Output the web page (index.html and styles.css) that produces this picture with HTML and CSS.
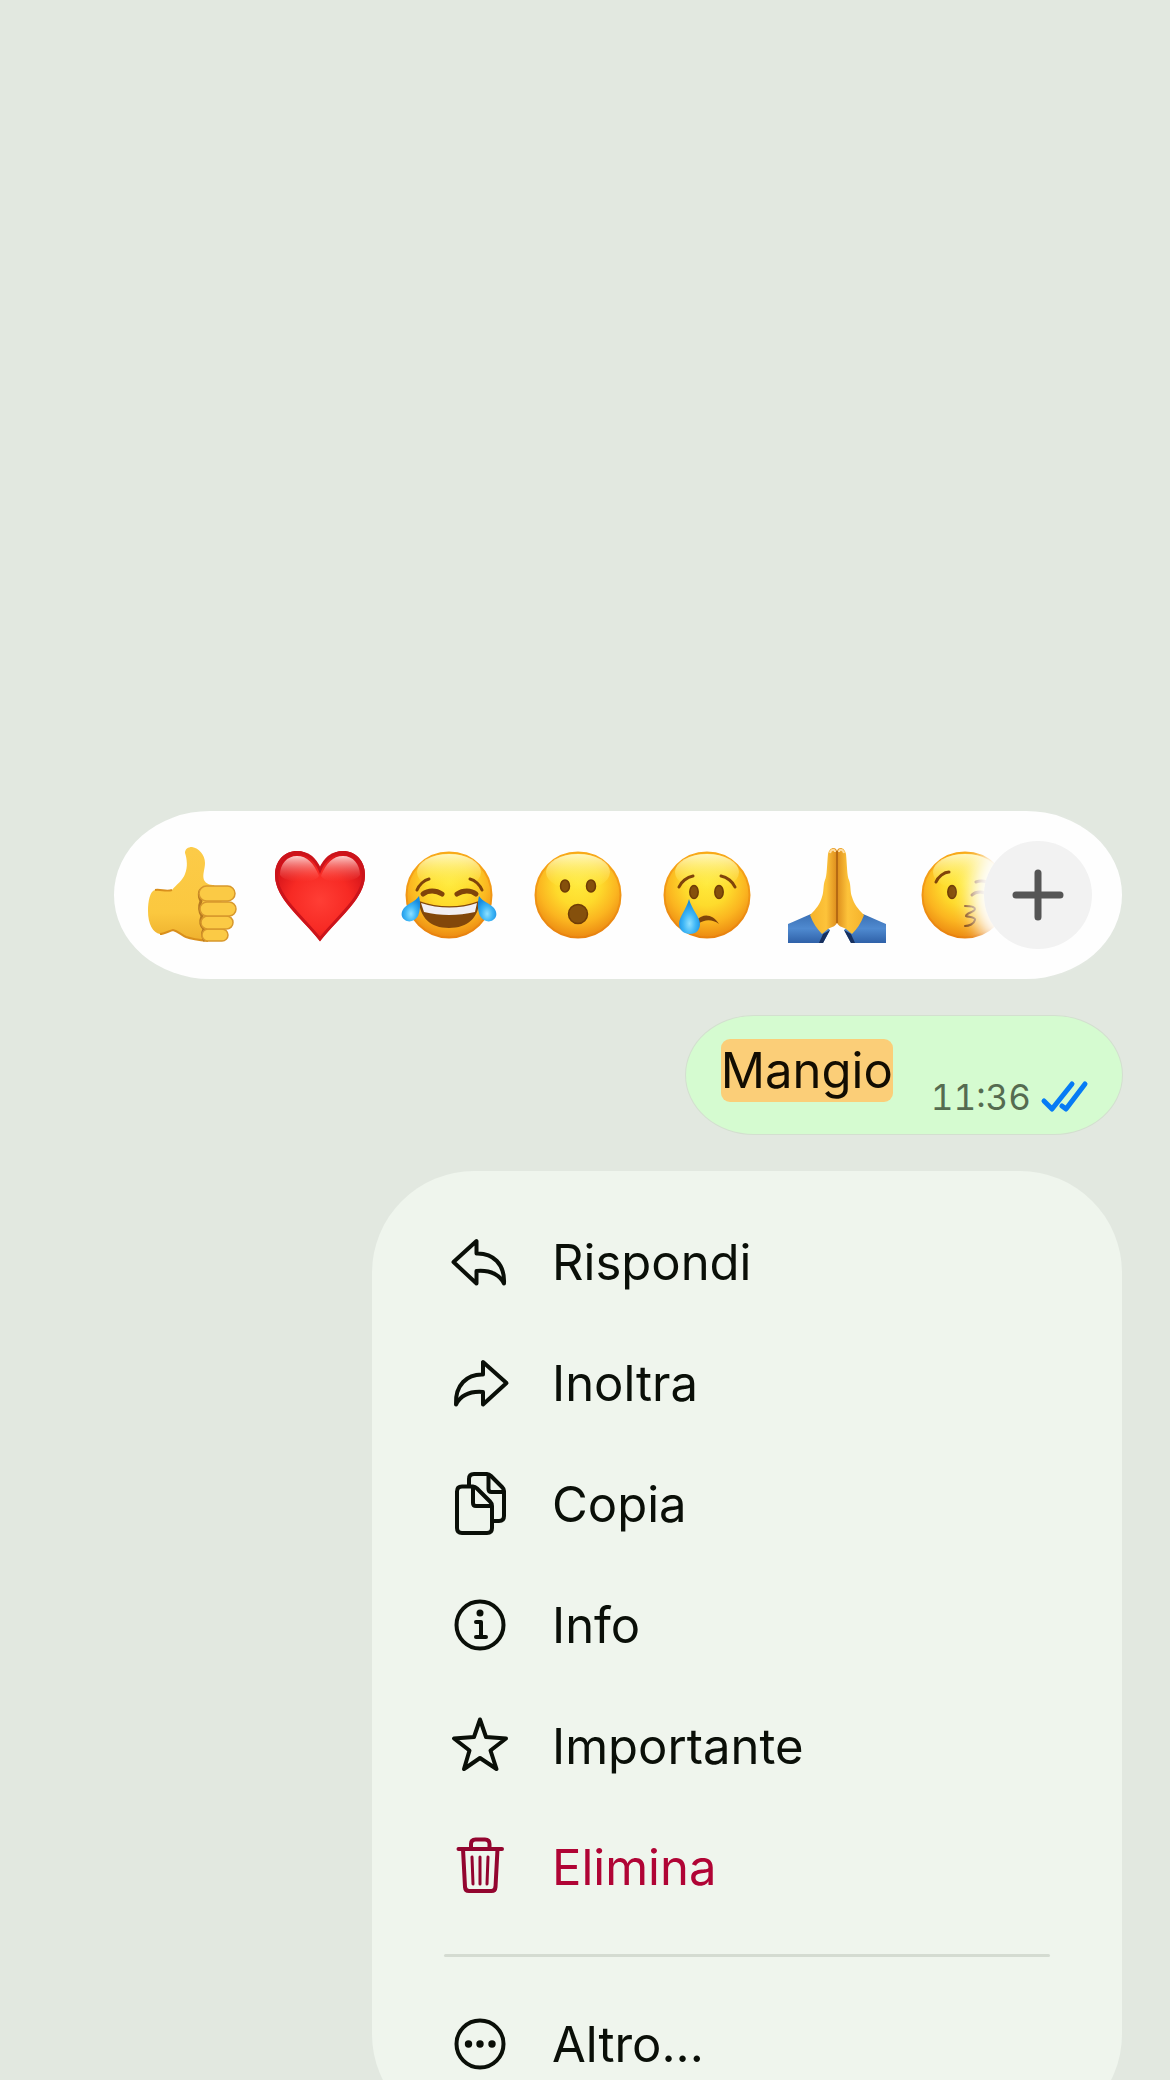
FILE: index.html
```html
<!DOCTYPE html>
<html lang="it">
  <head>
    <meta charset="UTF-8" />
    <meta name="viewport" content="width=device-width, initial-scale=1.0" />
    <title>Chat</title>
    <link rel="stylesheet" href="styles.css" />
  </head>
  <body>
    <main class="chat">
      <!-- Reactions start -->
      <div class="reactions">
        <div class="emoji-list">
          <button class="emoji" aria-label="Mi piace">
            <svg viewBox="0 0 96 96">
              <defs>
                <linearGradient id="hand" x1="0" y1="0" x2="0" y2="1">
                  <stop offset="0" stop-color="#fccb48" />
                  <stop offset="0.7" stop-color="#fbc83f" />
                  <stop offset="1" stop-color="#eeb02e" />
                </linearGradient>
                <radialGradient id="face" cx="0.5" cy="0.36" r="0.66">
                  <stop offset="0" stop-color="#ffea3c" />
                  <stop offset="0.4" stop-color="#fedb2c" />
                  <stop offset="0.7" stop-color="#fbb520" />
                  <stop offset="1" stop-color="#ea8510" />
                </radialGradient>
                <linearGradient id="shine" x1="0" y1="0" x2="0" y2="1">
                  <stop offset="0" stop-color="#fffbd0" stop-opacity="0.9" />
                  <stop offset="1" stop-color="#fff04a" stop-opacity="0" />
                </linearGradient>
                <linearGradient id="rim" x1="0" y1="0" x2="0" y2="1">
                  <stop offset="0" stop-color="#f8a91a" />
                  <stop offset="1" stop-color="#e8820f" />
                </linearGradient>
                <radialGradient id="tear" cx="0.5" cy="0.7" r="0.6">
                  <stop offset="0" stop-color="#8fe0ff" />
                  <stop offset="0.5" stop-color="#3eb6f6" />
                  <stop offset="1" stop-color="#168be0" />
                </radialGradient>
                <g id="head">
                  <circle cx="47" cy="48" r="42.500" fill="url(#face)" stroke="url(#rim)" stroke-width="2" />
                  <ellipse cx="47" cy="25" rx="32" ry="18" fill="url(#shine)" />
                </g>
              </defs>
              <path d="M41 6C41 2 44 0 48 0C55 1 61 8 61 16C61 22 58 28 60 33C62 37 66 38 70 38L80 60L76 92L66 94C55 93 48 92 42 90C37 88 34 84 29 83C25 84 20 87 16 87C9 86 4 77 4 64C4 54 6 44 11 43C17 42 22 45 28 43C32 38 39 33 41 27C44 20 43 12 41 6Z" fill="url(#hand)" />
              <path d="M11 43C17 42 22 45 28 43M16 87C20 87 25 84 29 83C34 84 37 88 42 90C48 92 55 93 64 94" fill="none" stroke="#d98f1c" stroke-width="2" />
              <path d="M60 41C55 42 54 48 57 54C55 59 55 64 58 69C56 74 56 78 60 82C58 86 58 90 61 94" fill="none" stroke="#b87a20" stroke-width="3" />
              <g fill="#fbca45" stroke="#d8982c" stroke-width="1.500">
                <rect x="58" y="82" width="26" height="12" rx="6" />
                <rect x="57" y="69" width="32" height="13" rx="6.500" />
                <rect x="56" y="55" width="36" height="14" rx="7" />
                <rect x="55" y="39" width="36" height="15" rx="7.500" />
              </g>
            </svg>
          </button>
          <button class="emoji" aria-label="Cuore">
            <svg viewBox="0 0 96 96">
              <defs>
                <radialGradient id="heart" cx="0.5" cy="0.55" r="0.6">
                  <stop offset="0" stop-color="#ff3e35" />
                  <stop offset="0.55" stop-color="#f72a24" />
                  <stop offset="1" stop-color="#cf1018" />
                </radialGradient>
                <linearGradient id="gloss" x1="0" y1="0" x2="0" y2="1">
                  <stop offset="0" stop-color="#ffd9d6" stop-opacity="0.95" />
                  <stop offset="1" stop-color="#ff5a50" stop-opacity="0" />
                </linearGradient>
              </defs>
              <path d="M47 24C42 11 34 4 24 4C11 4 2 14 2 28C2 52 28 70 47 94C66 70 92 52 92 28C92 14 83 4 70 4C60 4 52 11 47 24Z" fill="url(#heart)" />
              <path d="M47 23C42 11 34 5.500 24 5.500C12 5.500 3.500 15 3.500 28C3.500 51 29 69 47 92C65 69 90.500 51 90.500 28C90.500 15 82 5.500 70 5.500C60 5.500 52 11 47 23Z" fill="none" stroke="#cb141b" stroke-width="3" />
              <path d="M24 9C14 9 7 17 7 28C12 36 40 38 46 29C41 16 34 9 24 9ZM70 9C80 9 87 17 87 28C82 36 54 38 48 29C53 16 60 9 70 9Z" fill="url(#gloss)" />
            </svg>
          </button>
          <button class="emoji" aria-label="Risata">
            <svg viewBox="0 0 96 96">
              <use href="#head" />
              <g fill="none" stroke="#80440a" stroke-width="3" stroke-linecap="round">
                <path d="M15 43C17 38 22 33 27 32M80 43C78 38 73 33 68 32" />
                <path d="M21 47C26 43 34 43 40 47M55 47C61 43 69 43 74 47" stroke-width="5" />
              </g>
              <path d="M17 54C36 61 59 61 77 54C77 70 66 81 47 81C28 81 18 70 17 54Z" fill="#82470a" />
              <path d="M19 56C37 62 58 62 75 56L73 65C56 69 38 69 22 65Z" fill="#f1eff4" />
              <path d="M17 49C19 57 18 64 16 69C13 74 7 76 3 73C-2 70 -1 64 3 60C7 56 13 55 17 49Z" fill="url(#tear)" />
              <path d="M77 49C75 57 76 64 78 69C81 74 87 76 91 73C96 70 95 64 91 60C87 56 81 55 77 49Z" fill="url(#tear)" />
            </svg>
          </button>
          <button class="emoji" aria-label="Stupore">
            <svg viewBox="0 0 96 96">
              <use href="#head" />
              <g fill="#85500c" stroke="#6f3c06" stroke-width="1.500">
                <ellipse cx="34" cy="39" rx="4.500" ry="6" />
                <ellipse cx="60" cy="39" rx="4.500" ry="6" />
                <circle cx="47" cy="67" r="9.500" />
              </g>
            </svg>
          </button>
          <button class="emoji" aria-label="Tristezza">
            <svg viewBox="0 0 96 96">
              <use href="#head" />
              <g fill="#85500c" stroke="#6f3c06" stroke-width="1.500">
                <ellipse cx="34" cy="45" rx="4.200" ry="6.500" />
                <ellipse cx="59" cy="45" rx="4.200" ry="6.500" />
              </g>
              <path d="M19 40C21 35 27 30 33 29M75 40C73 35 67 30 61 29" fill="none" stroke="#80440a" stroke-width="3" stroke-linecap="round" />
              <path d="M37 73C43 66 53 67 59 77C52 72 45 72 38 77Z" fill="#80440a" />
              <path d="M29 52C32 63 40 70 40 77C40 83 36 87 30 87C24 87 19 83 19 77C19 70 26 63 29 52Z" fill="url(#tear)" />
            </svg>
          </button>
          <button class="emoji" aria-label="Grazie">
            <svg viewBox="0 0 96 96">
              <defs>
                <linearGradient id="sleeve" x1="0" y1="0" x2="0" y2="1">
                  <stop offset="0" stop-color="#3b70b4" />
                  <stop offset="0.5" stop-color="#4f8ad0" />
                  <stop offset="1" stop-color="#2f61a8" />
                </linearGradient>
                <linearGradient id="palm" x1="0" y1="0" x2="1" y2="0">
                  <stop offset="0" stop-color="#f5b32c" />
                  <stop offset="0.6" stop-color="#fdc33a" />
                  <stop offset="1" stop-color="#dd8d1d" />
                </linearGradient>
                <g id="arm">
                  <path d="M22 67C14 70 7 74 -1 77V96H34L41 83Z" fill="url(#sleeve)" />
                  <path d="M34 87L41 83L34 96H30Z" fill="#17305e" />
                  <path d="M39 7C40 0 47 -1 48 4V76C46 80 42 80 39 82L33 87C28 82 24 76 21 68C27 62 31 57 33 50C35 45 34 38 36 33C38 29 38 17 39 7Z" fill="url(#palm)" />
                  <path d="M41 6C42 2 46 2 46 5" fill="none" stroke="#ffdda2" stroke-width="2" />
                </g>
              </defs>
              <use href="#arm" />
              <use href="#arm" transform="translate(96 0) scale(-1 1)" />
              <path d="M48 4V76" stroke="#a85e10" stroke-width="1.500" />
            </svg>
          </button>
          <button class="emoji" aria-label="Bacio">
            <svg viewBox="0 0 96 96">
              <use href="#head" />
              <ellipse cx="34" cy="45" rx="4.200" ry="6.500" fill="#85500c" stroke="#6f3c06" stroke-width="1.500" />
              <g fill="none" stroke="#80440a" stroke-width="3" stroke-linecap="round">
                <path d="M18 35C20 30 26 25 31 25" />
                <path d="M54 48C58 44 66 44 70 48M58 35C64 33 70 35 74 39" />
                <path d="M47 59C52 59 57 60 57 62C57 65 48 66 48 69C50 70 58 70 57 73C56 77 51 79 47 79" stroke-width="2" />
              </g>
            </svg>
          </button>
        </div>
        <button class="btn-plus" aria-label="Altre reazioni">
          <svg viewBox="0 0 50 50"><path d="M25 3V47M3 25H47" /></svg>
        </button>
      </div>
      <!-- Reactions end -->

      <!-- Message -->
      <div class="bubble">
        <mark class="text">Mangio</mark>
        <div class="meta">
          <time>11:36</time>
          <svg class="ticks" viewBox="0 0 46 32">
            <path d="M3 20L11 28L31 3M21 25L25 28L44 3" />
          </svg>
        </div>
      </div>

      <!-- Menu start -->
      <div class="menu">
        <button class="item">
          <svg class="icon" viewBox="0 0 60 60">
            <path d="M3.500 29L26.500 8V20.500C43 20 55 31 54 50.500C49 41 39 37 26.500 38V50.500Z" />
          </svg>
          <span>Rispondi</span>
        </button>
        <button class="item">
          <svg class="icon" viewBox="0 0 60 60">
            <path d="M56.500 29L33 8V20.500C17 20 5 31 6 50.500C11 41 20 37 33 38V50.500Z" />
          </svg>
          <span>Inoltra</span>
        </button>
        <button class="item">
          <svg class="icon" viewBox="0 0 60 60">
            <path d="M19 11V4Q19 -1 24 -1H37Q39 -1 41 1L52 12Q54 14 54 16V41Q54 46 49 46H42" />
            <path d="M38.500 0V14Q38.500 17 41.500 17H53" />
            <path d="M12 11.500H23Q25 11.500 27 13.500L40 26.500Q42 28.500 42 31V53Q42 58 37 58H12Q7 58 7 53V16.500Q7 11.500 12 11.500Z" />
            <path d="M23 12V28Q23 31 26 31H41" />
          </svg>
          <span>Copia</span>
        </button>
        <button class="item">
          <svg class="icon" viewBox="0 0 60 60">
            <circle cx="30" cy="29" r="23.500" />
            <circle class="dot" cx="30" cy="17" r="3.500" />
            <path d="M26 26H31V41M26 41H36" />
          </svg>
          <span>Info</span>
        </button>
        <button class="item">
          <svg class="icon" viewBox="0 0 60 60">
            <path d="M30 2.500L36 20L56 21.500L40.500 33.500L46.500 52L30 41L14 52L19.500 33.500L4 21.500L24 20Z" />
          </svg>
          <span>Importante</span>
        </button>
        <button class="item delete">
          <svg class="icon" viewBox="0 0 60 60">
            <path d="M8.500 11H52M21 11V6Q21 1.500 25.500 1.500H35Q39.500 1.500 39.500 6V11" />
            <path d="M13 11L15 49Q15.300 53 19 53H41.500Q45.200 53 45.500 49L47.500 11" />
            <path class="thin" d="M22 19L23 46M30 19V46M38 19L37 46" />
          </svg>
          <span>Elimina</span>
        </button>
        <hr />
        <button class="item">
          <svg class="icon" viewBox="0 0 60 60">
            <circle cx="30" cy="29" r="23.500" />
            <circle class="dot" cx="18.500" cy="29" r="3.700" />
            <circle class="dot" cx="30" cy="29" r="3.700" />
            <circle class="dot" cx="42" cy="29" r="3.700" />
          </svg>
          <span>Altro...</span>
        </button>
      </div>
      <!-- Menu end -->
    </main>
  </body>
</html>
```
FILE: styles.css
```css
* {
    margin: 0;
    padding: 0;
    box-sizing: border-box;
}

body {
    font-family: Inter, "Liberation Sans", sans-serif;
    background: #e2e8e0;
    color: #0a0f08;
}

button {
    border: 0;
    background: none;
    font: inherit;
    color: inherit;
    cursor: pointer;
}

svg {
    display: block;
    overflow: visible;
}

.chat {
    display: flex;
    flex-direction: column;
    align-items: flex-end;
    gap: 37px;
    height: 100vh;
    padding: 39vh 48px 0;
    overflow: hidden;
}

/* reactions */
.reactions {
    display: flex;
    align-items: center;
    flex: none;
    width: 100%;
    max-width: 1008px;
    height: 168px;
    padding: 0 30px;
    background: #fefefe;
    border-radius: 96px / 84px;
}

.emoji-list {
    display: flex;
    flex: 1;
    gap: 33px;
    min-width: 0;
    overflow: hidden;
}

.emoji {
    flex: none;
    width: 96px;
    height: 96px;
}

.btn-plus {
    display: flex;
    align-items: center;
    justify-content: center;
    flex: none;
    position: relative;
    width: 108px;
    height: 108px;
    margin-left: -20px;
    border-radius: 50%;
    background: #f2f2f2;
    box-shadow: 0 0 18px 14px #fefefe;
}

.btn-plus svg {
    width: 50px;
    fill: none;
    stroke: #555;
    stroke-width: 7;
    stroke-linecap: round;
}

/* message */
.bubble {
    display: flex;
    flex: none;
    gap: 38px;
    height: 118px;
    padding: 23px 35px 17px;
    background: #d5fbd0;
    border-radius: 68px / 59px;
    box-shadow: 0 0 0 1px #d3dfcf;
}

.text {
    height: 63px;
    background: #fbce78;
    color: #120d02;
    border-radius: 9px;
    font-size: 49px;
    line-height: 63px;
}

.meta {
    display: flex;
    align-items: center;
    align-self: flex-end;
    gap: 10px;
    color: #556b50;
    font-size: 35px;
    font-variant-numeric: tabular-nums;
    line-height: 40px;
}

.ticks {
    width: 46px;
    fill: none;
    stroke: #067bf5;
    stroke-width: 5;
    stroke-linecap: round;
    stroke-linejoin: round;
}

/* menu */
.menu {
    flex: none;
    width: 750px;
    max-width: 100%;
    padding: 31px 72px;
    background: #eff5ed;
    border-radius: 102px;
}

.item {
    display: flex;
    align-items: center;
    gap: 42px;
    width: 100%;
    height: 121px;
    padding-left: 6px;
    font-size: 49px;
    line-height: 60px;
    text-align: left;
}

.icon {
    flex: none;
    width: 60px;
    height: 60px;
    fill: none;
    stroke: currentColor;
    stroke-width: 4;
    stroke-linecap: round;
    stroke-linejoin: round;
}

.icon .dot {
    fill: currentColor;
    stroke: none;
}

.icon .thin {
    stroke-width: 3;
}

.delete {
    color: #b00435;
}

.delete .icon {
    color: #93052f;
}

hr {
    height: 3px;
    margin: 26px 0 27px;
    border: 0;
    border-radius: 2px;
    background: #d4dbd1;
}
```
